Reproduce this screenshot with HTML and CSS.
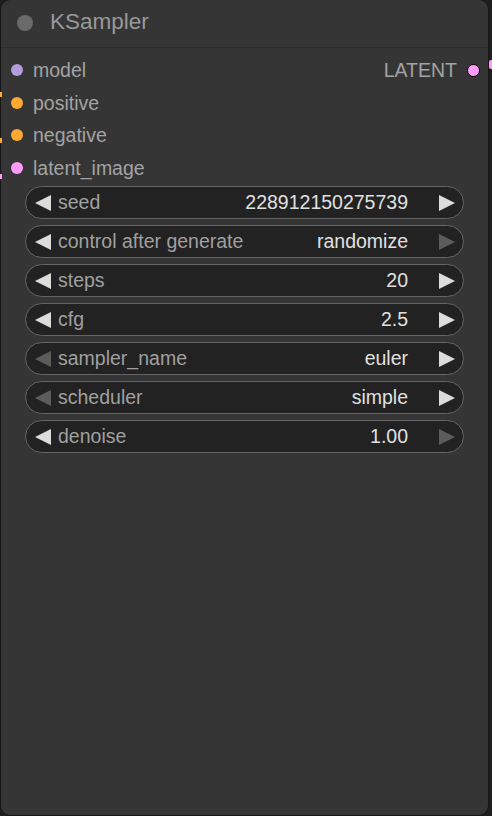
FILE: index.html
```html
<!DOCTYPE html>
<html>
<head>
<meta charset="utf-8">
<link rel="stylesheet" href="styles.css">
</head>
<body>
<div class="canvas">
  <span class="wire wire-l1"></span>
  <span class="wire wire-l2"></span>
  <span class="wire wire-l3"></span>
  <span class="wire wire-r1"></span>
  <div class="node">
    <div class="title">
      <span class="title-dot"></span>
      <span class="title-text">KSampler</span>
    </div>
    <div class="slots">
      <div class="slot-row">
        <div class="slot"><span class="dot dot-model"></span><span class="slot-label">model</span></div>
        <div class="slot out"><span class="slot-label">LATENT</span><span class="dot dot-latent out-dot"></span></div>
      </div>
      <div class="slot-row">
        <div class="slot"><span class="dot dot-cond"></span><span class="slot-label">positive</span></div>
      </div>
      <div class="slot-row">
        <div class="slot"><span class="dot dot-cond"></span><span class="slot-label">negative</span></div>
      </div>
      <div class="slot-row">
        <div class="slot"><span class="dot dot-latent"></span><span class="slot-label">latent_image</span></div>
      </div>
    </div>
    <div class="widgets">
      <div class="widget">
        <svg class="arrow" viewBox="0 0 16 16"><polygon points="16,0 16,16 0,8"/></svg>
        <span class="w-label">seed</span>
        <span class="w-value">228912150275739</span>
        <svg class="arrow" viewBox="0 0 16 16"><polygon points="0,0 0,16 16,8"/></svg>
      </div>
      <div class="widget">
        <svg class="arrow" viewBox="0 0 16 16"><polygon points="16,0 16,16 0,8"/></svg>
        <span class="w-label">control after generate</span>
        <span class="w-value">randomize</span>
        <svg class="arrow off" viewBox="0 0 16 16"><polygon points="0,0 0,16 16,8"/></svg>
      </div>
      <div class="widget">
        <svg class="arrow" viewBox="0 0 16 16"><polygon points="16,0 16,16 0,8"/></svg>
        <span class="w-label">steps</span>
        <span class="w-value">20</span>
        <svg class="arrow" viewBox="0 0 16 16"><polygon points="0,0 0,16 16,8"/></svg>
      </div>
      <div class="widget">
        <svg class="arrow" viewBox="0 0 16 16"><polygon points="16,0 16,16 0,8"/></svg>
        <span class="w-label">cfg</span>
        <span class="w-value">2.5</span>
        <svg class="arrow" viewBox="0 0 16 16"><polygon points="0,0 0,16 16,8"/></svg>
      </div>
      <div class="widget">
        <svg class="arrow off" viewBox="0 0 16 16"><polygon points="16,0 16,16 0,8"/></svg>
        <span class="w-label">sampler_name</span>
        <span class="w-value">euler</span>
        <svg class="arrow" viewBox="0 0 16 16"><polygon points="0,0 0,16 16,8"/></svg>
      </div>
      <div class="widget">
        <svg class="arrow off" viewBox="0 0 16 16"><polygon points="16,0 16,16 0,8"/></svg>
        <span class="w-label">scheduler</span>
        <span class="w-value">simple</span>
        <svg class="arrow" viewBox="0 0 16 16"><polygon points="0,0 0,16 16,8"/></svg>
      </div>
      <div class="widget">
        <svg class="arrow" viewBox="0 0 16 16"><polygon points="16,0 16,16 0,8"/></svg>
        <span class="w-label">denoise</span>
        <span class="w-value">1.00</span>
        <svg class="arrow off" viewBox="0 0 16 16"><polygon points="0,0 0,16 16,8"/></svg>
      </div>
    </div>
  </div>
</div>
</body>
</html>
```
FILE: styles.css
```css
html, body {
  margin: 0;
  padding: 0;
  background: #1e1e1e;
}
body {
  width: 492px;
  height: 816px;
  overflow: hidden;
  font-family: "Liberation Sans", Arial, sans-serif;
}
.canvas {
  position: relative;
  width: 492px;
  height: 816px;
  padding: 0 0 0 1px;
  box-sizing: border-box;
}
.node {
  width: 487px;
  height: 815px;
  background: #353535;
  border-radius: 9px;
  box-shadow: 0 0 0 1px #161616;
  display: flex;
  flex-direction: column;
}
.title {
  border-bottom: 1px solid #2b2b2b;
  display: flex;
  align-items: center;
  padding-left: 16px;
  gap: 17px;
  box-sizing: border-box;
  height: 48px;
}
.title-dot {
  width: 16px;
  height: 16px;
  border-radius: 50%;
  background: #6a6a6a;
  margin-top: -2px;
}
.title-text {
  color: #999;
  font-size: 22.5px;
  margin-top: -4px;
}
.slots {
  padding-top: 6px;
  display: flex;
  flex-direction: column;
}
.slot-row {
  height: 32.5px;
  display: flex;
  align-items: center;
  justify-content: space-between;
  padding: 0 8px 0 10px;
}
.slot {
  display: flex;
  align-items: center;
  gap: 10px;
}
.slot-label {
  color: #a3a3a3;
  font-size: 19.5px;
  line-height: 22px;
}
.dot {
  width: 12px;
  height: 12px;
  border-radius: 50%;
  display: block;
}
.dot-model { background: #b39ddb; }
.dot-cond { background: #ffa931; }
.dot-latent { background: #ff9cf9; }
.out { gap: 10px; }
.out-dot {
  width: 11px;
  height: 11px;
  border: 1.5px solid #000;
}
.widgets {
  margin-top: 2px;
  padding: 0 24px;
  display: flex;
  flex-direction: column;
  gap: 6px;
}
.widget {
  height: 33px;
  box-sizing: border-box;
  border: 1.5px solid #656565;
  border-radius: 17px;
  background: #222;
  display: flex;
  align-items: center;
  padding: 0 8px 0 9px;
  font-size: 19.5px;
}
.arrow {
  width: 16px;
  height: 16px;
  fill: #dcdcdc;
  flex: none;
}
.arrow.off { fill: #5c5c5c; }
.w-label {
  color: #a0a0a0;
  margin-left: 7px;
  flex: 1;
  white-space: nowrap;
}
.w-value {
  color: #e0e0e0;
  margin-right: 31px;
  white-space: nowrap;
}
.wire {
  position: absolute;
  width: 2px;
  height: 5px;
}
.wire-l1 { left: 0; top: 92px; background: #ffa931; }
.wire-l2 { left: 0; top: 138px; background: #ffa931; }
.wire-l3 { left: 0; top: 174px; background: #ff9cf9; }
.wire-r1 { left: 489px; top: 60px; width: 3px; height: 9px; background: #ff9cf9; border-radius: 2px 0 0 2px; }
```
